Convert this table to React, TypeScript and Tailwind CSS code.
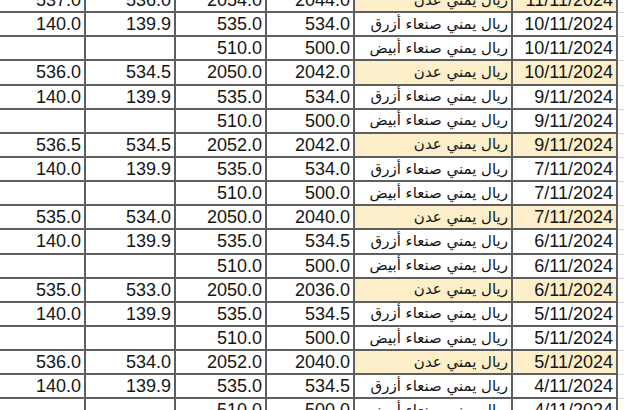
import React from 'react';

type Row = {
  buy: string;
  sell: string;
  high: string;
  low: string;
  kind: 'aden' | 'blue' | 'white';
  date: string;
};

const LABELS: Record<Row['kind'], string> = {
  aden: 'ريال يمني عدن',
  blue: 'ريال يمني صنعاء أزرق',
  white: 'ريال يمني صنعاء أبيض',
};

const rows: Row[] = [
  { buy: '537.0', sell: '536.0', high: '2054.0', low: '2044.0', kind: 'aden', date: '11/11/2024' },
  { buy: '140.0', sell: '139.9', high: '535.0', low: '534.0', kind: 'blue', date: '10/11/2024' },
  { buy: '', sell: '', high: '510.0', low: '500.0', kind: 'white', date: '10/11/2024' },
  { buy: '536.0', sell: '534.5', high: '2050.0', low: '2042.0', kind: 'aden', date: '10/11/2024' },
  { buy: '140.0', sell: '139.9', high: '535.0', low: '534.0', kind: 'blue', date: '9/11/2024' },
  { buy: '', sell: '', high: '510.0', low: '500.0', kind: 'white', date: '9/11/2024' },
  { buy: '536.5', sell: '534.5', high: '2052.0', low: '2042.0', kind: 'aden', date: '9/11/2024' },
  { buy: '140.0', sell: '139.9', high: '535.0', low: '534.0', kind: 'blue', date: '7/11/2024' },
  { buy: '', sell: '', high: '510.0', low: '500.0', kind: 'white', date: '7/11/2024' },
  { buy: '535.0', sell: '534.0', high: '2050.0', low: '2040.0', kind: 'aden', date: '7/11/2024' },
  { buy: '140.0', sell: '139.9', high: '535.0', low: '534.5', kind: 'blue', date: '6/11/2024' },
  { buy: '', sell: '', high: '510.0', low: '500.0', kind: 'white', date: '6/11/2024' },
  { buy: '535.0', sell: '533.0', high: '2050.0', low: '2036.0', kind: 'aden', date: '6/11/2024' },
  { buy: '140.0', sell: '139.9', high: '535.0', low: '534.5', kind: 'blue', date: '5/11/2024' },
  { buy: '', sell: '', high: '510.0', low: '500.0', kind: 'white', date: '5/11/2024' },
  { buy: '536.0', sell: '534.0', high: '2052.0', low: '2040.0', kind: 'aden', date: '5/11/2024' },
  { buy: '140.0', sell: '139.9', high: '535.0', low: '534.5', kind: 'blue', date: '4/11/2024' },
  { buy: '', sell: '', high: '510.0', low: '500.0', kind: 'white', date: '4/11/2024' },
];

const cell =
  'h-[24.15px] border-b-2 border-r-2 border-[#5e5e5e] flex items-center justify-end pr-[3px] overflow-hidden whitespace-nowrap';

export default function App() {
  return (
    <div
      className="w-[624px] h-[410px] overflow-hidden bg-white text-[#151515]"
      style={{ fontFamily: '"Liberation Sans", Arial, sans-serif' }}
    >
      {/* first and last rows are cut by the frame, as in a cropped sheet */}
      <div className="-mt-[11px] grid grid-cols-[86px_90px_91px_88px_158px_105px_6px] text-[18px] leading-none">
        {rows.map((r, i) => {
          const hl = r.kind === 'aden' ? 'bg-[#fcefc9]' : 'bg-white';
          return (
            <React.Fragment key={i}>
              <div className={cell}>{r.buy}</div>
              <div className={cell}>{r.sell}</div>
              <div className={cell}>{r.high}</div>
              <div className={cell}>{r.low}</div>
              <div
                dir="rtl"
                className={`${cell} ${hl} justify-start text-[15px]`}
                style={{ fontFamily: '"DejaVu Sans", sans-serif' }}
              >
                {LABELS[r.kind]}
              </div>
              <div className={`${cell} ${hl}`}>{r.date}</div>
              <div className="h-[24.15px] border-b border-[#d9d9d9]" />
            </React.Fragment>
          );
        })}
      </div>
    </div>
  );
}
